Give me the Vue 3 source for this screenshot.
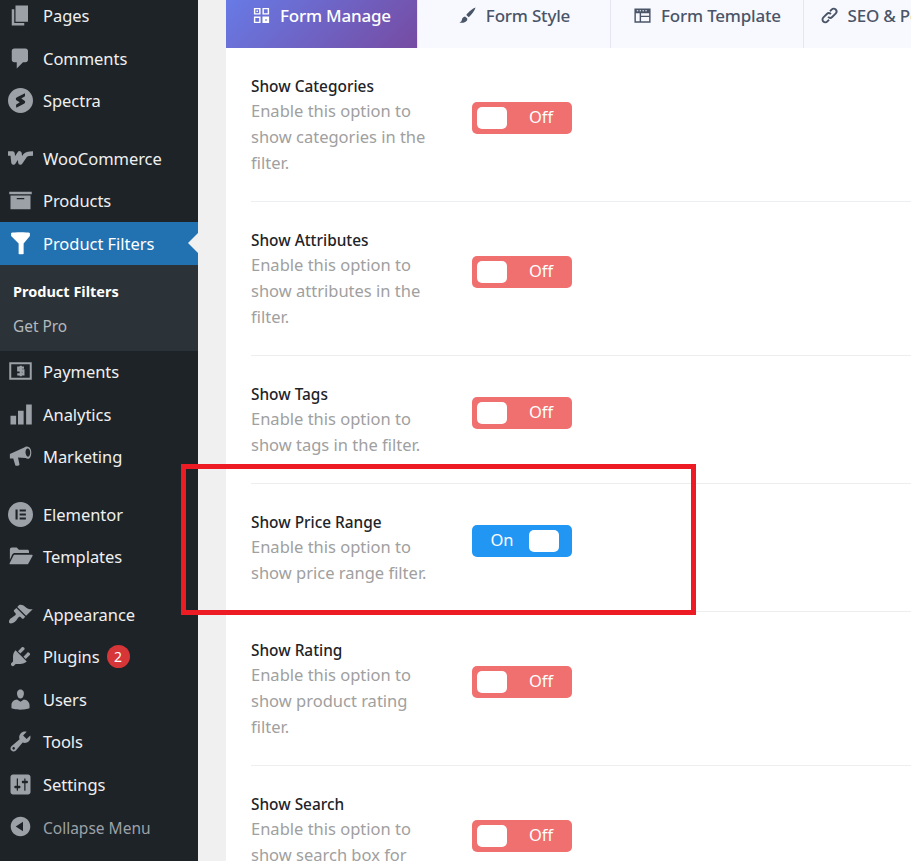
<script setup>
// dashicon-style glyphs, all on a 20x20 box
const icons = {
  pages: '<path d="M6 15V2h10v13H6zm-1 1h8v2H3V5h2v11z"/>',
  comments: '<path d="M5 2h9c1.1 0 2 .9 2 2v7c0 1.1-.9 2-2 2h-2l-5 5v-5H5c-1.1 0-2-.9-2-2V4c0-1.1.9-2 2-2z"/>',
  spectra: '<path fill-rule="evenodd" d="M10 0a10 10 0 1 1 0 20a10 10 0 0 1 0-20zM13.600 4.200 7.200 7.400c-1.300.7-1.200 1.900-.2 2.600l2.400 1.300-3 2 .2 2.500 6.200-3.300c1.300-.8 1.200-1.900.2-2.600L10.600 8.400l3-1.800z"/>',
  woo: '<path fill="none" stroke="currentColor" stroke-width="3.600" stroke-linejoin="round" d="M0 5.900h3.600l.8 7.300 4.800-7.300.7 7.300 3.800-5.600c1-1.400 2.700-1.700 6.300-1.700"/>',
  products: '<path fill-rule="evenodd" d="M19 3v2H1V3h18zM2 6h16v11H2V6zm11 3V8H7v1h6z"/>',
  filter: '<path d="M2.500 1.500c2-.6 13-.6 15 0v2.500L12.500 10v8.300c-1 .4-3 .4-4 0V10L2.500 4z"/>',
  payments: '<path fill-rule="evenodd" d="M1 2.500h18v14H1zM2.600 4.100v10.800h14.800V4.100z"/><path d="M12.800 6.800H8.200v2.300h4.100v3.100H7.400M10.200 5.300v8.400" fill="none" stroke="currentColor" stroke-width="1.800"/>',
  analytics: '<path d="M2 11h4.500v7H2zM8 7h4.500v11H8zM14.500 2H19v16h-4.500z"/>',
  marketing: '<path fill-rule="evenodd" d="M1.500 8 13 2.800c1.500-1.300 4.200-1 5.200 1.500s.3 6.700-1.700 7.400c-.8.3-1.600.1-2.400-.5L8 10.800l1.200 5.600c.1 1-2.800 1.300-3.300.7L4.200 11.600l-2.700-.1zM15.700 3.500c-1.300 0-2 2.200-1.500 4.300s1.700 2.800 2.600 2c1-.9 1.200-3.300.6-4.800-.4-1-1-1.500-1.700-1.500z"/>',
  elementor: '<path fill-rule="evenodd" d="M10 0a10 10 0 1 1 0 20a10 10 0 0 1 0-20zM6 6v8h1.700V6zM9.300 6v1.600h5V6zm0 3.200v1.600h5V9.200zm0 3.200V14h5v-1.600z"/>',
  templates: '<path d="M1.500 4.500C1.500 3.500 2.200 2.800 3 2.800h4L8.700 4.500h6.800c.8 0 1.300.5 1.300 1.300v1.400H5.500c-1 0-1.700.4-2.200 1.300L1.500 12.500z"/><path d="M5.300 8.500H19c.6 0 .9.500.6 1l-3.300 6c-.3.500-.7.700-1.300.7H1.800c-.5 0-.7-.4-.5-.8l3-6c.2-.5.6-.9 1-.9z"/>',
  appearance: '<path d="M14.480 11.060 7.410 3.990l1.500-1.500c.5-.56 2.300-.47 3.510.32 1.210.8 1.430 1.280 2.910 2.100 1.180.64 2.450 1.260 4.450.85zm-.71.71L6.700 4.700 4.930 6.470c-.39.39-.39 1.020 0 1.410l1.060 1.060c.39.39.39 1.030 0 1.420-.6.6-1.430 1.110-2.210 1.690-.35.26-.7.53-1.010.84C1.430 13.230.18 15.820 1.200 16.840c1.010 1.010 3.600-.23 4.940-1.570.31-.31.58-.66.84-1.010.58-.78 1.090-1.610 1.690-2.210.39-.39 1.020-.39 1.410 0l1.060 1.060c.39.39 1.020.39 1.410 0z"/>',
  plugins: '<path d="M13.110 4.360 9.870 7.600 8 5.730l3.240-3.240c.35-.34 1.050-.2 1.560.32.52.51.66 1.210.31 1.550zm-8 1.770.91-1.120 9.010 9.010-1.190.84c-.71.71-2.630 1.160-3.820 1.160H6.140L4.900 17.260c-.59.59-1.540.59-2.120 0-.59-.58-.59-1.530 0-2.120l1.240-1.240v-3.880c0-1.130.4-3.190 1.090-3.890zm7.260 3.970 3.240-3.240c.34-.35 1.040-.21 1.550.31.52.51.66 1.210.31 1.550l-3.240 3.250z"/>',
  users: '<path d="M10 9.250c-2.270 0-2.730-3.440-2.730-3.440C7 4.020 7.820 2 9.970 2c2.160 0 2.980 2.020 2.710 3.810 0 0-.41 3.440-2.680 3.440zm0 2.570L12.720 10c2.390 0 4.520 2.330 4.520 4.530v2.490s-3.650 1.130-7.240 1.130c-3.650 0-7.240-1.130-7.240-1.130v-2.490c0-2.250 1.940-4.480 4.470-4.480z"/>',
  tools: '<path fill-rule="evenodd" d="M16.680 9.770c-1.340 1.340-3.300 1.670-4.950.99l-5.410 6.520c-.99.99-2.590.99-3.580 0s-.99-2.590 0-3.570l6.520-5.420c-.68-1.650-.35-3.610.99-4.950 1.280-1.280 3.120-1.620 4.720-1.060l-2.890 2.890 2.820 2.820 2.860-2.870c.53 1.580.18 3.390-1.080 4.650zM3.810 16.210c.4.39 1.040.39 1.430 0 .4-.4.4-1.040 0-1.430-.39-.4-1.030-.4-1.430 0-.39.39-.39 1.030 0 1.430z"/>',
  settings: '<path fill-rule="evenodd" d="M18 16V4c0-1.100-.9-2-2-2H4c-1.100 0-2 .9-2 2v12c0 1.100.9 2 2 2h12c1.100 0 2-.9 2-2zM8 11h1c.55 0 1 .45 1 1s-.45 1-1 1H8v1.500c0 .28-.22.5-.5.5s-.5-.22-.5-.5V13H6c-.55 0-1-.45-1-1s.45-1 1-1h1V5.500c0-.28.22-.5.5-.5s.5.22.5.500V11zm5-2h-1c-.55 0-1-.45-1-1s.45-1 1-1h1V5.500c0-.28.22-.5.5-.5s.5.22.5.500V7h1c.55 0 1 .45 1 1s-.45 1-1 1h-1v5.500c0 .28-.22.5-.5.5s-.5-.22-.5-.5V9z"/>',
  collapse: '<path fill-rule="evenodd" d="M10 2.160c4.330 0 7.840 3.510 7.840 7.840s-3.510 7.840-7.840 7.840S2.160 14.330 2.160 10 5.710 2.160 10 2.160zm2 11.720V6.120L6.180 9.970z"/>',
}

const menuTop = [
  { label: 'Pages', icon: 'pages' },
  { label: 'Comments', icon: 'comments' },
  { label: 'Spectra', icon: 'spectra' },
  { sep: true },
  { label: 'WooCommerce', icon: 'woo' },
  { label: 'Products', icon: 'products' },
  { label: 'Product Filters', icon: 'filter', current: true },
]
const menuBottom = [
  { label: 'Payments', icon: 'payments' },
  { label: 'Analytics', icon: 'analytics' },
  { label: 'Marketing', icon: 'marketing' },
  { sep: true },
  { label: 'Elementor', icon: 'elementor' },
  { label: 'Templates', icon: 'templates' },
  { sep: true },
  { label: 'Appearance', icon: 'appearance' },
  { label: 'Plugins', icon: 'plugins', badge: 2 },
  { label: 'Users', icon: 'users' },
  { label: 'Tools', icon: 'tools' },
  { label: 'Settings', icon: 'settings' },
  { label: 'Collapse Menu', icon: 'collapse', muted: true },
]

const tabs = [
  { label: 'Form Manage', active: true, icon: '<path fill-rule="evenodd" d="M2 2h7v7H2zM3.500 3.500v4h4v-4zM11 2h7v7h-7zM12.500 3.500v4h4v-4zM2 11h7v7H2zM3.500 12.500v4h4v-4zM11 11h7v7h-7zM4.700 4.700h1.600v1.600H4.700zM14 14h1.500v1.500H14z"/>' },
  { label: 'Form Style', icon: '<path d="M18.500 1.500c-3 1-7.500 4.500-9.800 8l2.600 2.300c3.200-2.800 6.300-7 7.200-10.300zM7.400 11c-2 .3-3 1.700-3.300 3.500-.2 1.300-1 2.300-2.600 3 2.800.6 6.500.2 7.900-2.300.5-.9.500-1.800.2-2.400z"/>' },
  { label: 'Form Template', icon: '<path fill-rule="evenodd" d="M1.500 2.500h17v15h-17zM3 7.500V16h4V7.500zM8.500 7.500v2.700H17V7.500zm0 4.200V16H17v-4.300z"/><path fill="#f8f9fe" d="M4 4.500h1.500v1H4zM7 4.500h1.500v1H7zM10 4.500h1.500v1H10zM13 4.500h1.500v1H13z"/>' },
  { label: 'SEO & Permalink', icon: '<path fill="none" stroke="currentColor" stroke-width="2" d="M8.500 11.500c1.500 1.500 3 1.400 4.300.1l3.600-3.600c1.300-1.300 1.300-3.100.1-4.300s-3-1.200-4.300.1L10.500 5.500M11.500 8.500c-1.500-1.500-3-1.400-4.300-.1l-3.600 3.600c-1.300 1.300-1.300 3.100-.1 4.300s3 1.200 4.300-.1l1.700-1.700"/>' },
]

const options = [
  { title: 'Show Categories', desc: 'Enable this option to show categories in the filter.' },
  { title: 'Show Attributes', desc: 'Enable this option to show attributes in the filter.' },
  { title: 'Show Tags', desc: 'Enable this option to show tags in the filter.' },
  { title: 'Show Price Range', desc: 'Enable this option to show price range filter.', on: true },
  { title: 'Show Rating', desc: 'Enable this option to show product rating filter.' },
  { title: 'Show Search', desc: 'Enable this option to show search box for products filter.' },
]
</script>

<template>
  <div class="screen">
    <aside class="sidebar">
      <template v-for="(item, i) in menuTop" :key="i">
        <div v-if="item.sep" class="sep"></div>
        <div v-else class="item" :class="{ current: item.current }">
          <svg class="icon" viewBox="0 0 20 20" fill="currentColor" v-html="icons[item.icon]"></svg>
          <span>{{ item.label }}</span>
        </div>
      </template>
      <div class="submenu">
        <div class="subitem strong">Product Filters</div>
        <div class="subitem">Get Pro</div>
      </div>
      <template v-for="(item, i) in menuBottom" :key="i">
        <div v-if="item.sep" class="sep"></div>
        <div v-else class="item" :class="{ muted: item.muted }">
          <svg class="icon" viewBox="0 0 20 20" fill="currentColor" v-html="icons[item.icon]"></svg>
          <span>{{ item.label }}</span>
          <b v-if="item.badge" class="badge">{{ item.badge }}</b>
        </div>
      </template>
    </aside>

    <main class="main">
      <div class="panel">
        <nav class="tabs">
          <div v-for="tab in tabs" :key="tab.label" class="tab" :class="{ active: tab.active }">
            <svg class="tabicon" viewBox="0 0 20 20" fill="currentColor" v-html="tab.icon"></svg>
            <span>{{ tab.label }}</span>
          </div>
        </nav>
        <section class="options">
          <div v-for="opt in options" :key="opt.title" class="row">
            <div class="text">
              <h4>{{ opt.title }}</h4>
              <p>{{ opt.desc }}</p>
            </div>
            <div class="toggle" :class="{ on: opt.on }">
              <span class="knob"></span>
              <span class="state">{{ opt.on ? 'On' : 'Off' }}</span>
            </div>
          </div>
        </section>
      </div>
    </main>

    <div class="highlight"></div>
  </div>
</template>

<style scoped>
.screen {
  position: relative;
  display: flex;
  width: 911px;
  height: 861px;
  overflow: hidden;
  font-family: "Noto Sans", "Open Sans", sans-serif;
}

.sidebar {
  flex: none;
  width: 198px;
  background: #1d2327;
  color: #f0f0f1;
}
.sidebar > :first-child {
  margin-top: -5.500px;
}
.item {
  position: relative;
  display: flex;
  align-items: center;
  height: 42.5px;
  font-size: 16.500px;
  letter-spacing: -0.05px;
  color: #f0f0f1;
}
.item .icon {
  flex: none;
  width: 25px;
  height: 25px;
  margin: 0 10px 0 8px;
  color: #9ca1a7;
}
.item.current {
  background: #2271b1;
  color: #fff;
}
.item.current .icon {
  color: #fff;
}
.item.current::after {
  content: "";
  position: absolute;
  right: 0;
  top: 11px;
  border: 10px solid transparent;
  border-left: 0;
  border-right-color: #f0f0f1;
}
.item.muted {
  font-size: 15.500px;
  letter-spacing: 0;
  color: #9ca1a7;
}
.item.muted span {
  margin-top: 2px;
}
.sep {
  height: 15px;
}
.submenu {
  height: 86px;
  box-sizing: border-box;
  padding-top: 9px;
  background: #2c3338;
}
.subitem {
  height: 35px;
  padding-left: 13px;
  line-height: 35px;
  font-size: 15.400px;
  color: #b4b9be;
}
.subitem.strong {
  font-size: 14.500px;
  font-weight: 700;
  color: #fff;
}
.badge {
  display: flex;
  align-items: center;
  justify-content: center;
  width: 23px;
  height: 23px;
  margin-left: 7px;
  border-radius: 50%;
  background: #d63638;
  color: #fff;
  font-size: 14px;
  font-weight: 400;
}

.main {
  flex: 1;
  min-width: 0;
  padding-left: 28px;
  background: #f0f0f1;
}
.panel {
  height: calc(100% + 16px);
  margin-top: -16px;
  background: #fff;
  overflow: hidden;
}
.tabs {
  display: flex;
  height: 64px;
  background: #f8f9fe;
}
.tab {
  flex: none;
  display: flex;
  align-items: center;
  justify-content: center;
  gap: 9px;
  width: 193px;
  box-sizing: border-box;
  padding-bottom: 2px;
  border-left: 1px solid #e6e6f2;
  color: #4a5568;
  font-size: 17px;
  font-weight: 500;
  letter-spacing: -0.2px;
  white-space: nowrap;
}
.tabicon {
  flex: none;
  width: 19px;
  height: 19px;
}
.tab.active {
  width: 191px;
  border-left: 0;
  background: linear-gradient(135deg, #667eea, #764ba2);
  color: #fff;
}

.row {
  display: flex;
  align-items: center;
  margin-left: 25px;
  padding: 27px 0 25px;
  border-bottom: 1px solid #eceef0;
}
.text {
  flex: none;
  width: 195px;
  margin-right: 26px;
}
.text h4 {
  margin: 0;
  color: #1d2327;
  font-size: 15.400px;
  font-weight: 500;
  line-height: 23px;
}
.text p {
  margin: 0;
  color: #a0a0a0;
  font-size: 16.500px;
  line-height: 26px;
}
.toggle {
  flex: none;
  display: flex;
  align-items: center;
  width: 100px;
  height: 32px;
  margin-bottom: 16px;
  padding: 0 5px;
  box-sizing: border-box;
  border-radius: 5px;
  background: #f07070;
  color: #fff;
  font-size: 16.500px;
}
.toggle.on {
  flex-direction: row-reverse;
  background: #2196f3;
  padding-right: 13px;
}
.knob {
  flex: none;
  width: 30px;
  height: 22px;
  border-radius: 5px;
  background: #fff;
}
.state {
  flex: 1;
  padding: 0 0 2px 8px;
  text-align: center;
}
.toggle.on .state {
  padding: 0 2px 2px 0;
}

.highlight {
  position: absolute;
  left: 181px;
  top: 464px;
  width: 515px;
  height: 151px;
  box-sizing: border-box;
  border: 5px solid #ed1c24;
}
</style>
